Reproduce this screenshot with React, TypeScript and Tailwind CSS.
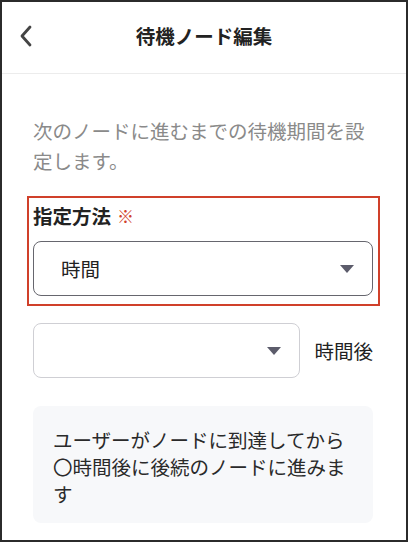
import React from 'react';

function Caret() {
  return (
    <svg width="14" height="8" viewBox="0 0 14 8" className="shrink-0">
      <path d="M0 0 H14 L7 8 Z" fill="#5c5c6b" />
    </svg>
  );
}

export default function App() {
  return (
    <div
      className="w-[408px] h-[542px] border-2 border-[#2b2b2b] bg-white overflow-hidden text-[#222]"
      style={{ fontFamily: '"Noto Sans CJK JP", "Noto Sans", sans-serif' }}
    >
      <header className="h-[72px] flex items-center border-b border-[#ececec] pb-[4px]">
        <button className="w-[56px] flex items-center pl-[16px]">
          <svg width="16" height="24" viewBox="0 0 16 24">
            <path d="M12 3 L4 12 L12 21" fill="none" stroke="#444" strokeWidth="2.8" strokeLinecap="round" strokeLinejoin="round" />
          </svg>
        </button>
        <h1 className="flex-1 text-center text-[19.5px] font-bold leading-none">待機ノード編集</h1>
        <div className="w-[56px]" />
      </header>

      <main className="pl-[31px] pr-[33px] pt-[42px]">
        <p className="text-[19.5px] leading-[30px] text-[#8a8a8a]">
          次のノードに進むまでの待機期間を設定します。
        </p>

        <div className="mt-[20px] -ml-[6px] -mr-[7px] border-2 border-[#d0402a] pl-[4px] pr-[5px] pt-[5px] pb-[8px]">
          <div className="flex items-center gap-[6px] h-[26px] text-[19.5px] leading-[26px]">
            <span className="font-bold">指定方法</span>
            <span className="text-[#d0402a] text-[17px]">※</span>
          </div>
          <div className="mt-[12px] h-[55px] rounded-[8px] border-[1.5px] border-[#66666e] flex items-center justify-between pl-[27px] pr-[18px]">
            <span className="text-[19.5px]">時間</span>
            <Caret />
          </div>
        </div>

        <div className="mt-[17px] flex items-center gap-[14px]">
          <div className="flex-1 h-[55px] rounded-[8px] border border-[#cfcfd4] flex items-center justify-end pr-[18px]">
            <Caret />
          </div>
          <span className="shrink-0 whitespace-nowrap text-[19.5px]">時間後</span>
        </div>

        <div className="mt-[28px] h-[117px] rounded-[8px] bg-[#f7f8fa] px-[20px] pt-[20px] text-[19.5px] leading-[27px] text-[#2a2a2a]">
          ユーザーがノードに到達してから〇時間後に後続のノードに進みます
        </div>
      </main>
    </div>
  );
}
